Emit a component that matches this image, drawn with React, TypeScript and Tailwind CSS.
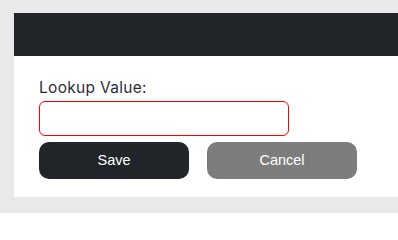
export default function App() {
  return (
    <div className="w-[398px] h-[213px] bg-[#e9e9e9] pt-[13px] pl-[14px]">
      <div className="bg-white h-[184px] w-[384px]">
        <div className="h-[43px] bg-[#212529]" />
        <div className="pl-[25px] pt-[22px]">
          <label className="block text-[15.5px] leading-[20px] text-[#2a2e33] tracking-[0.3px]" style={{ fontFamily: "Inter, 'Noto Sans', sans-serif" }}>
            Lookup Value:
          </label>
          <input className="mt-[3px] block w-[250px] h-[35px] border border-[#ff0000] rounded-[6px] outline-none px-2" />
          <div className="mt-[6px] flex gap-[18px]" style={{ fontFamily: "'Liberation Sans', Arial, sans-serif" }}>
            <button className="w-[150px] h-[37px] rounded-[10px] bg-[#212529] text-white text-[14.5px]">Save</button>
            <button className="w-[150px] h-[37px] rounded-[10px] bg-[#7d7d7d] text-white text-[14.5px]">Cancel</button>
          </div>
        </div>
      </div>
    </div>
  );
}
